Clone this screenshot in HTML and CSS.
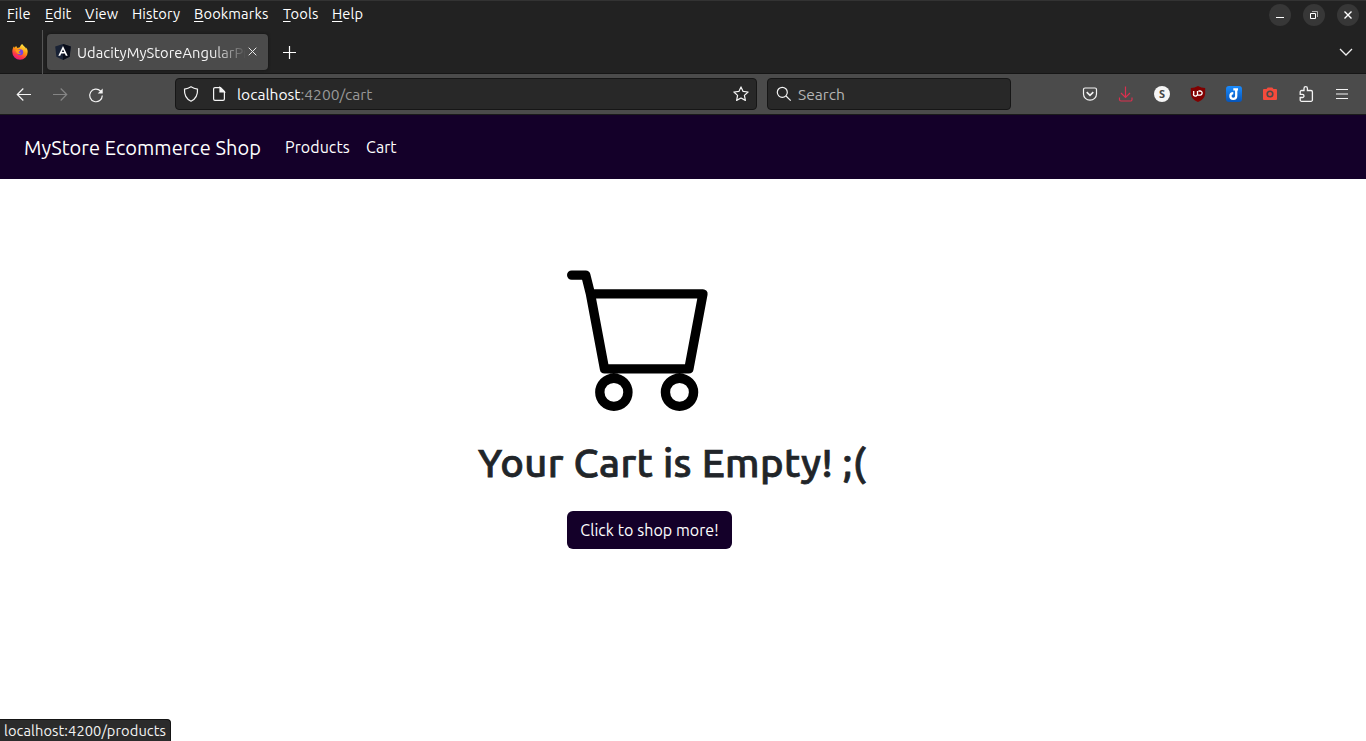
FILE: index.html
```html
<!DOCTYPE html>
<html lang="en">
<head>
<meta charset="utf-8">
<title>UdacityMyStoreAngularProject</title>
<link rel="stylesheet" href="styles.css">
</head>
<body>
<div class="window">
  <header class="titlebar">
    <nav class="menu">
      <span><u>F</u>ile</span><span><u>E</u>dit</span><span><u>V</u>iew</span><span>Hi<u>s</u>tory</span><span><u>B</u>ookmarks</span><span><u>T</u>ools</span><span><u>H</u>elp</span>
    </nav>
    <div class="controls">
      <svg viewBox="0 0 22 22"><circle cx="11" cy="11" r="11" fill="#373737"/><path d="M7 13.5h8" stroke="#fff"/></svg>
      <svg viewBox="0 0 22 22"><circle cx="11" cy="11" r="11" fill="#373737"/><path d="M7.5 9.5h5v5h-5z" fill="none" stroke="#fff"/><path d="M9 7.500h5.500v5.500" fill="none" stroke="#aaa"/></svg>
      <svg viewBox="0 0 22 22"><circle cx="11" cy="11" r="11" fill="#373737"/><path d="M7.500 7.500l7 7m0-7l-7 7" stroke="#fff" stroke-width="1.400"/></svg>
    </div>
  </header>
  <div class="tabs">
    <div class="pinned">
      <svg width="16" height="16" viewBox="0 0 16 16">
        <defs><linearGradient id="fire" x1=".8" y1="0" x2=".3" y2="1"><stop offset="0" stop-color="#fff44f"/><stop offset=".45" stop-color="#ff980e"/><stop offset=".75" stop-color="#ff3647"/><stop offset="1" stop-color="#e31587"/></linearGradient></defs>
        <path d="M15.300 5.500c-.3-.9-1-1.800-1.700-2.100.3.600.4 1 .4 1.300C13 2.500 11.300 1.700 10.200 0 8.700.9 8 2.400 7.900 3.300c-.8 0-1.500.3-2 .7C5 3.800 4.500 3 4.400 2 3.500 2.500 2.900 3.100 2.500 3.700c-.3-.2-.4-1.100-.4-1.500C.9 3.400.3 5.600.3 8a7.700 7.700 0 0 0 15.400 0c0-.9-.1-1.700-.4-2.500z" fill="url(#fire)"/>
        <circle cx="8.200" cy="8.200" r="3" fill="#7542e5"/>
        <path d="M3.300 6.200c1.200-1 2.600-.9 3.400-.2.600-.1 1.200 0 1.600.4-.3.900-1.600.9-1.800 1.700.3 1 1.700 1.100 2.600.5-.5 1.800-3.300 2-4.400.2z" fill="#ff9b16"/>
      </svg>
    </div>
    <div class="tab">
      <svg class="favicon" viewBox="0 0 16 16"><path d="M8 0l7.800 2.600-1.200 10.200L8 16l-6.600-3.200L.2 2.600z" fill="#192235"/><path d="M8 0l7.800 2.600-1.200 10.200L8 16z" fill="#090d19"/><path d="M8 2l-4.700 9.800h1.900l1-2.300h3.600l1 2.300h1.900zm0 3.500l1.200 2.600H6.800z" fill="#fff" fill-rule="evenodd"/></svg>
      <span class="tab-title">UdacityMyStoreAngularPr</span>
      <svg class="close" viewBox="0 0 9 9"><path d="M.7.700l7.600 7.600m0-7.600L.7 8.300" stroke="#e8e8e8"/></svg>
    </div>
    <svg class="plus" viewBox="0 0 13 13"><path d="M6.500 0v13M0 6.500h13" stroke="#fff" stroke-width="1.200"/></svg>
    <svg class="chevron" viewBox="0 0 14 8"><path d="M1 1l6 6 6-6" fill="none" stroke="#f0f0f0" stroke-width="1.300"/></svg>
  </div>
  <div class="toolbar">
    <div class="history">
      <svg viewBox="0 0 16 16" class="line"><path d="M15 7.500H1.500m5.800-6L1.300 7.500l6 6"/></svg>
      <svg viewBox="0 0 16 16" class="line dim"><path d="M1 7.500h13.500M8.700 1.500l6 6-6 6"/></svg>
      <svg viewBox="0 0 16 16" class="line"><path d="M14.300 8.500A6.300 6.300 0 1 1 12.500 4L14 5.500"/><path d="M14.700 1.500v5h-5z" fill="#f4f4f4" stroke="none"/></svg>
    </div>
    <div class="urlbar">
      <svg viewBox="0 0 16 16" class="line"><path d="M8 .8c2 1.300 4 2 6.500 2.400.4 6-2 9.800-6.500 12-4.500-2.200-6.900-6-6.500-12C4 2.800 6 2.100 8 .8z"/></svg>
      <svg viewBox="0 0 16 16" class="line page"><path d="M9.500 1.600H4A1.400 1.400 0 0 0 2.600 3v10A1.400 1.400 0 0 0 4 14.400h8a1.400 1.400 0 0 0 1.400-1.400V5.500z"/><path d="M9 1.500V6h4.500z" fill="#f4f4f4"/></svg>
      <span class="address"><b>localhost</b>:4200/cart</span>
      <svg viewBox="0 0 16 16" class="line star"><path d="M8 .9l2.100 4.500 5 .6-3.700 3.400 1 5L8 12l-4.400 2.400 1-5L.9 6l5-.6z" stroke-linejoin="round"/></svg>
    </div>
    <div class="search">
      <svg viewBox="0 0 16 16" class="line"><circle cx="6.300" cy="6.300" r="5"/><path d="M10 10l4.700 4.700"/></svg>
      <span>Search</span>
    </div>
    <div class="extensions">
      <svg viewBox="0 0 16 16" class="line"><path d="M3 2h10a1.500 1.500 0 0 1 1.500 1.500V8a6.500 6.200 0 0 1-13 0V3.500A1.500 1.500 0 0 1 3 2z"/><path d="M4.700 6.200L8 9.300l3.300-3.100" stroke-width="1.600"/></svg>
      <svg viewBox="0 0 16 16" class="line download"><path d="M7.500 .5v11M3 7l4.500 4.500L12 7M1.500 11.500v2A1.500 1.500 0 0 0 3 15h9.500a1.500 1.500 0 0 0 1.500-1.500v-2"/></svg>
      <svg viewBox="0 0 16 16"><circle cx="8" cy="8" r="8" fill="#f5f5f5"/><text x="8" y="12" text-anchor="middle" class="s-mark">S</text></svg>
      <svg viewBox="0 0 16 16"><path d="M8 0c2.200 1.300 4.500 2 7.200 2v5c0 4.500-2.800 7-7.200 9-4.400-2-7.200-4.500-7.200-9V2C3.500 2 5.800 1.300 8 0z" fill="#800000"/><path d="M3.700 5v2.500a1.600 1.600 0 0 0 3.300 1.400M7.500 5v4.100h2.600a2.050 2.050 0 1 0 0-4.100H8.500" fill="none" stroke="#fff" stroke-width="1.300"/></svg>
      <svg viewBox="0 0 16 16"><defs><linearGradient id="blue" x2="0" y2="1"><stop stop-color="#1a8cff"/><stop offset="1" stop-color="#0754b8"/></linearGradient></defs><rect width="16" height="16" rx="3" fill="url(#blue)"/><path d="M7.300 3.300h4.700M10.200 3.300v6.700a2.900 2.900 0 1 1-2.900-2.900" fill="none" stroke="#fff" stroke-width="2.300"/></svg>
      <svg viewBox="0 0 16 16"><path d="M2 3h2.500l1.200-1.500h4.600L11.500 3H14a1 1 0 0 1 1 1v9a1 1 0 0 1-1 1H2a1 1 0 0 1-1-1V4a1 1 0 0 1 1-1z" fill="#f44b3c"/><circle cx="8" cy="8" r="2.800" fill="none" stroke="#4a4a4a" stroke-width="1.600"/></svg>
      <svg viewBox="0 0 16 16" class="line puzzle"><path d="M6 4.500V2.400a1.700 1.700 0 0 1 3.400 0v2.100h3.600a1.400 1.400 0 0 1 1.400 1.400v8a1.400 1.400 0 0 1-1.400 1.400H3.600A1.400 1.400 0 0 1 2.200 13.900v-2.400h2.200a1.600 1.600 0 0 0 0-3.200H2.200V5.900a1.400 1.400 0 0 1 1.400-1.400z"/></svg>
      <svg viewBox="0 0 16 16" class="line"><path d="M2 3.500h12M2 8h12M2 12.500h12"/></svg>
    </div>
  </div>
  <nav class="navbar">
    <a class="brand">MyStore Ecommerce Shop</a>
    <a class="products">Products</a>
    <a class="cart-link">Cart</a>
  </nav>
  <main class="empty">
    <svg class="cart" viewBox="0 0 16 16"><path d="M0 1.500A.5.500 0 0 1 .5 1H2a.5.500 0 0 1 .485.379L2.890 3H14.500a.5.500 0 0 1 .491.592l-1.500 8A.5.500 0 0 1 13 12H4a.5.500 0 0 1-.491-.408L2.010 3.607 1.610 2H.5a.5.500 0 0 1-.5-.5zM3.102 4l1.313 7h8.170l1.313-7H3.102zM5 12a2 2 0 1 0 0 4 2 2 0 0 0 0-4zm7 0a2 2 0 1 0 0 4 2 2 0 0 0 0-4zm-7 1a1 1 0 1 1 0 2 1 1 0 0 1 0-2zm7 0a1 1 0 1 1 0 2 1 1 0 0 1 0-2z"/></svg>
    <h1>Your Cart is Empty! ;(</h1>
    <button>Click to shop more!</button>
  </main>
  <div class="status">localhost:4200/products</div>
</div>
</body>
</html>
```
FILE: styles.css
```css
* { box-sizing: border-box; }
body { margin: 0; font-family: Ubuntu, "Noto Sans", sans-serif; font-size: 14.667px; color: #fff; }
svg { display: block; flex: none; }
.window { position: relative; width: 1366px; height: 741px; display: flex; flex-direction: column; background: #fff; overflow: hidden; }
.titlebar { height: 30px; background: #222; border-top: 1px solid #333; display: flex; justify-content: space-between; }
.menu { display: grid; grid-template-columns: 38px 40px 47px 62px 89px 49px 40px; padding-left: 7px; line-height: 26px; letter-spacing: .12px; white-space: nowrap; }
.menu u { text-underline-offset: 2px; text-decoration-thickness: 1px; }
.controls { display: flex; gap: 12px; padding: 3px 7px 0 0; }
.controls svg { width: 22px; height: 22px; }
.tabs { height: 44px; background: #222; border-bottom: 1px solid #161616; display: flex; align-items: center; }
.pinned { width: 43px; height: 44px; border-right: 1px solid #555; padding: 14px 0 0 12px; }
.tab { width: 221px; height: 36px; margin-left: 4px; border-radius: 4px; background: #4b4b4b; display: flex; align-items: center; padding: 0 11px 0 8px; box-shadow: 0 0 3px #111; }
.favicon { width: 16px; height: 16px; margin-right: 6px; }
.tab-title { width: 168px; padding-top: 2px; overflow: hidden; white-space: nowrap; color: #f6f6f6; letter-spacing: .05px; -webkit-mask-image: linear-gradient(to right, #000 135px, transparent 170px); mask-image: linear-gradient(to right, #000 135px, transparent 170px); }
.close { width: 9px; height: 9px; margin-left: 3px; }
.plus { width: 13px; height: 13px; margin: 2px 0 0 15px; }
.chevron { width: 14px; height: 8px; margin: 0 13px 0 auto; }
.toolbar { height: 41px; background: #4b4b4b; border-bottom: 1px solid #1b1b1b; display: flex; align-items: center; }
.line { fill: none; stroke: #f4f4f4; stroke-width: 1.2; }
.dim { stroke: #858585; }
.history { width: 175px; padding: 1px 0 0 16px; display: flex; gap: 20px; }
.history svg, .urlbar svg, .search svg, .extensions svg { width: 16px; height: 16px; }
.urlbar, .search { height: 32px; border: 1px solid #161616; border-radius: 4px; background: #282828; display: flex; align-items: center; font-size: 15.6px; line-height: 18px; }
.urlbar { width: 582px; padding: 0 7px; }
.page { margin: 0 10px 0 12px; }
.address { color: #999; }
.address b { color: #fbfbfe; font-weight: 400; }
.star { margin-left: auto; }
.search { width: 244px; margin-left: 10px; padding-left: 8px; gap: 6px; color: #b4b4b4; }
.extensions { display: flex; gap: 20px; margin: 0 16px 0 auto; }
.download { stroke: #d9304f; }
.puzzle { stroke-width: 1.3; }
.s-mark { font: bold 11px "Open Sans", sans-serif; fill: #444; }
.navbar { height: 64px; background: #140029; display: flex; align-items: center; padding-left: 24px; font-size: 16px; letter-spacing: .08px; white-space: nowrap; }
.brand { width: 261px; font-size: 20px; letter-spacing: .06px; }
.products { width: 81px; }
.empty { flex: 1; display: flex; flex-direction: column; align-items: flex-start; color: #212529; }
.cart { width: 150px; height: 150px; margin: 82px 0 0 567px; fill: #000; }
h1 { margin: 28px 0 0 478px; font-size: 40px; line-height: 48px; font-weight: 500; letter-spacing: .36px; -webkit-text-stroke: .75px #212529; white-space: nowrap; }
button { width: 165px; height: 38px; margin: 24px 0 0 567px; padding: 0; border: 0; border-radius: 6px; background: #140029; color: #fff; font: inherit; font-size: 16px; letter-spacing: .06px; white-space: nowrap; }
.status { position: absolute; left: 0; bottom: 0; width: 171px; height: 22px; padding-left: 4px; border: solid #151515; border-width: 1px 1px 0 0; border-radius: 0 4px 0 0; background: #2b2b2b; color: #f3f3f3; line-height: 22px; letter-spacing: .08px; white-space: nowrap; }
```
